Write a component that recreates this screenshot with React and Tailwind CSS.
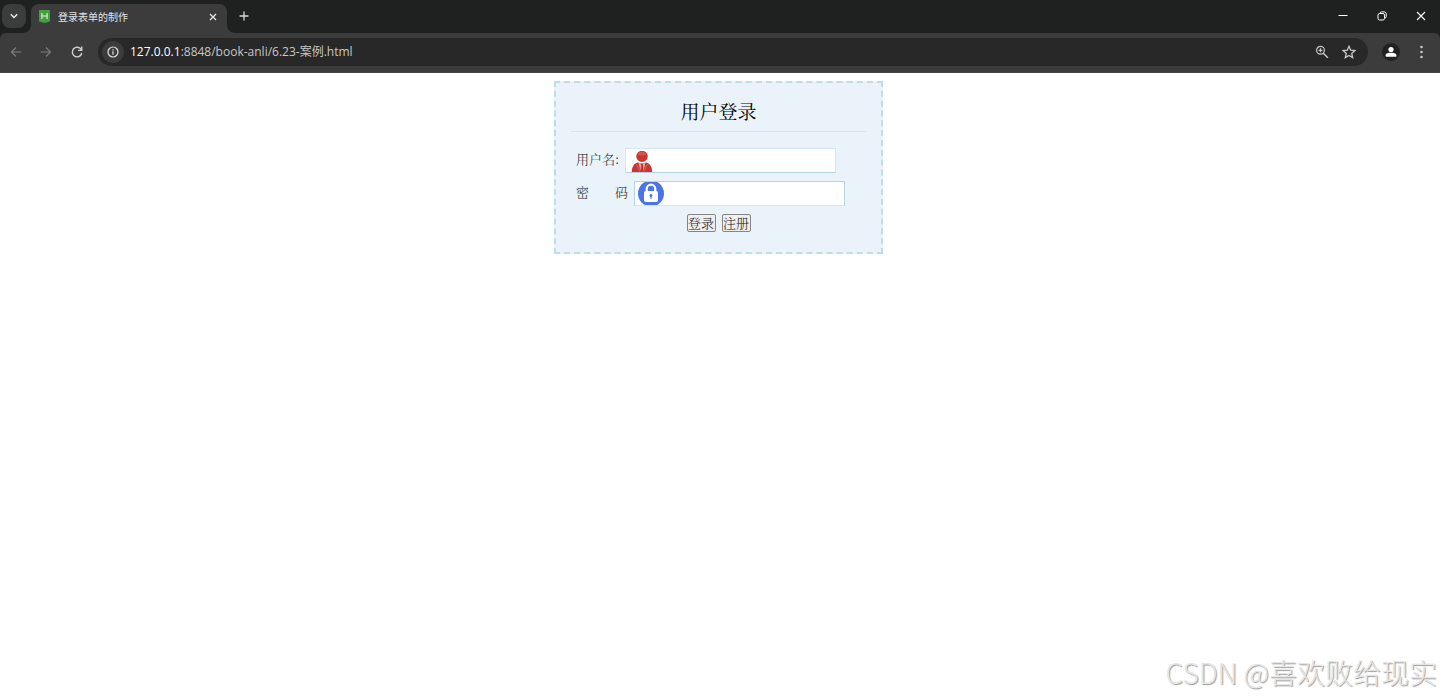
import React from "react";

const UI_FONT = "font-['Open_Sans','Noto_Sans_CJK_SC',sans-serif]";

function ChevronIcon() {
  return (
    <svg width="10" height="10" viewBox="0 0 10 10" fill="none" stroke="#e8e8e8" strokeWidth="1.5">
      <path d="M1.8 3.3 5 6.5l3.2-3.2" />
    </svg>
  );
}

function Flare({ flip }) {
  return (
    <svg width="8" height="8" viewBox="0 0 8 8" className={flip ? "-scale-x-100" : ""} aria-hidden="true">
      <path d="M8 0v8H0c4.4 0 8-3.6 8-8z" fill="#3c3c3c" />
    </svg>
  );
}

function Favicon() {
  return (
    <svg width="11" height="13" viewBox="0 0 11 13" aria-hidden="true">
      <path d="M0 0h11v11.4L5.5 13 0 11.4z" fill="#43a03c" />
      <path d="M2.9 3v6M8.1 3v6M2.9 6h5.2" stroke="#e4f5e2" strokeWidth="1.1" fill="none" />
    </svg>
  );
}

function TabStrip() {
  return (
    <div className="flex h-[33px] items-end bg-[#1f2121]">
      <button aria-label="搜索标签页" className="mb-[5px] ml-0.5 flex size-6 items-center justify-center rounded-lg bg-[#3c3c3c]">
        <ChevronIcon />
      </button>
      <div className="flex items-end pl-[5px]">
        <div className="relative flex h-[29px] w-[196px] items-center rounded-t-lg bg-[#3c3c3c] pr-2 pb-1 pl-2">
          <span className="absolute bottom-0 -left-2"><Flare /></span>
          <span className="absolute -right-2 bottom-0"><Flare flip /></span>
          <Favicon />
          <span className="ml-2 flex-1 text-[10px] leading-4 text-[#e3e3e3]">登录表单的制作</span>
          <button aria-label="关闭标签页" className="flex size-3 items-center justify-center">
            <svg width="8" height="8" viewBox="0 0 8 8" stroke="#e8e8e8" strokeWidth="1.3"><path d="m1 1 6 6M7 1 1 7" /></svg>
          </button>
        </div>
        <button aria-label="新标签页" className="mb-3 ml-3 flex size-[10px] items-center justify-center">
          <svg width="10" height="10" viewBox="0 0 10 10" stroke="#d8d8d8" strokeWidth="1.3"><path d="M5 .5v9M.5 5h9" /></svg>
        </button>
      </div>
      <div className="mb-[11px] ml-auto flex items-center gap-[27px] pr-[13px]">
        <button aria-label="最小化">
          <svg width="12" height="12" viewBox="0 0 12 12" stroke="#fff" strokeWidth="1"><path d="M1.5 5.5h9" /></svg>
        </button>
        <button aria-label="还原">
          <svg width="12" height="12" viewBox="0 0 12 12" fill="none" stroke="#fff" strokeWidth="1">
            <rect x="2" y="3.5" width="6.5" height="6.5" rx="1.6" />
            <path d="M4 3.2c.2-.9.8-1.3 1.6-1.3h2.6c1.2 0 2 .8 2 2v2.7c0 .8-.5 1.4-1.3 1.6" />
          </svg>
        </button>
        <button aria-label="关闭">
          <svg width="12" height="12" viewBox="0 0 12 12" stroke="#fff" strokeWidth="1.1"><path d="m2 2 8 8M10 2l-8 8" /></svg>
        </button>
      </div>
    </div>
  );
}

function Toolbar() {
  return (
    <div className="bg-[#1f2121]">
      <div className="flex h-10 items-center rounded-t-md border-b border-[#484545] bg-[#3c3c3c] pr-3 pb-px pl-[9px]">
        <div className="flex items-center gap-4">
          <button aria-label="后退" className="p-px">
            <svg width="12" height="12" viewBox="0 0 12 12" fill="none" stroke="#7d7d7d" strokeWidth="1.2"><path d="M11.3 6H1.5M6 1.5 1.5 6 6 10.5" /></svg>
          </button>
          <button aria-label="前进" className="p-px">
            <svg width="12" height="12" viewBox="0 0 12 12" fill="none" stroke="#7d7d7d" strokeWidth="1.2"><path d="M.7 6h9.8M6 1.5 10.5 6 6 10.5" /></svg>
          </button>
          <button aria-label="重新加载" className="p-px">
            <svg width="14" height="14" viewBox="0 0 14 14" fill="none" stroke="#d0d0d0" strokeWidth="1.4">
              <path d="M11.2 4.6A4.8 4.8 0 1 0 11.8 8" />
              <path d="M11.7 1.6v3.8H8" />
            </svg>
          </button>
        </div>
        <div className="ml-[13px] flex h-7 flex-1 items-center rounded-full bg-[#282828] pr-3 pl-1">
          <button aria-label="网站信息" className="flex size-[22px] items-center justify-center rounded-full bg-[#3c3c3c]">
            <svg width="12" height="12" viewBox="0 0 12 12" fill="none" stroke="#e3e3e3" strokeWidth="1.2">
              <circle cx="6" cy="6" r="5" />
              <path d="M6 5.3v3.4M6 3.2v1.2" />
            </svg>
          </button>
          <p className="ml-1.5 flex-1 text-[12px] leading-5 text-[#c7c7c7]">
            <span className="text-white">127.0.0.1</span>:8848/book-anli/6.23-案例.html
          </p>
          <button aria-label="缩放" className="mr-[13px]">
            <svg width="14" height="14" viewBox="0 0 14 14" fill="none" stroke="#c7c7c7" strokeWidth="1.2">
              <circle cx="5.5" cy="5.3" r="3.9" />
              <path d="m8.3 8.2 4.6 4.6" strokeWidth="1.5" />
              <path d="M5.5 3.3v4M3.5 5.3h4" />
            </svg>
          </button>
          <button aria-label="收藏">
            <svg width="14" height="14" viewBox="0 0 14 14" fill="none" stroke="#c7c7c7" strokeWidth="1.3">
              <path d="m7 1.3 1.7 3.9 4.2.4-3.2 2.8 1 4.2L7 10.4l-3.7 2.2 1-4.2L1.1 5.6l4.2-.4z" />
            </svg>
          </button>
        </div>
        <button aria-label="用户" className="ml-3.5 flex size-[18px] items-center justify-center rounded-full bg-[#202222]">
          <svg width="12" height="12" viewBox="0 0 12 12" fill="#fff">
            <circle cx="6" cy="3.5" r="2.6" />
            <path d="M.6 10V9C.6 7.3 4 6.7 6 6.7s5.4.6 5.4 2.3v1c0 .4-.2.7-.6.7H1.200c-.4 0-.6-.3-.6-.7z" />
          </svg>
        </button>
        <button aria-label="菜单" className="ml-3.5">
          <svg width="14" height="14" viewBox="0 0 14 14" fill="#c7c7c7">
            <circle cx="7.5" cy="2" r="1.3" />
            <circle cx="7.5" cy="7" r="1.3" />
            <circle cx="7.5" cy="12" r="1.3" />
          </svg>
        </button>
      </div>
    </div>
  );
}

function UserIcon() {
  return (
    <svg width="24" height="23" viewBox="-2 0 24 23" aria-hidden="true">
      <path d="M5.3 7.6C5.3 3.8 7.8 2 11 2s5.7 1.8 5.7 5.6c0 3-2.7 5.4-5.7 5.4S5.3 10.600 5.3 7.6z" fill="#c93531" />
      <path d="M6.3 5.2C7.500 2 14.5 2 15.7 5.2c-2.7 1.600-6.700 1.600-9.400 0z" fill="#d9524c" />
      <path d="M.8 23c0-5.200 2.200-8.800 6.200-9.600l4 1.600 4-1.600c4 .8 6.200 4.400 6.200 9.600z" fill="#c93531" />
      <path d="M7.500 13.500 9.700 23h2.600l2.200-9.500L11 15z" fill="#eba9a6" />
      <path d="M9.600 14.500h2.800l-.6 2L13 23H9l1.200-6.500z" fill="#c93531" />
      <path d="m5.500 15 3.400 7.500M16.500 15l-3.400 7.500" stroke="#e08580" strokeWidth=".6" />
    </svg>
  );
}

function LockIcon() {
  return (
    <svg width="26" height="23" viewBox="0 1 26 23" aria-hidden="true">
      <circle cx="13" cy="12.5" r="13" fill="#4b74e4" />
      <path d="M8.700 11V8a4.300 4.300 0 0 1 8.600 0v3" fill="none" stroke="#fff" strokeWidth="2.2" />
      <rect x="6" y="10" width="14" height="11" rx="1.8" fill="#fff" />
      <circle cx="13" cy="14.5" r="1.4" fill="#4b74e4" />
      <path d="M13 15v2.8" stroke="#4b74e4" strokeWidth="1.2" />
    </svg>
  );
}

function Field({ id, type, label, icon, borders }) {
  return (
    <div className="flex items-center gap-1.5">
      <label htmlFor={id} className="pb-[3px] text-[13px] leading-5 whitespace-pre">{label}</label>
      <div className={`relative flex h-[25px] w-[211px] border bg-white ${borders}`}>
        <span className="pointer-events-none absolute top-0 left-[3px]">{icon}</span>
        <input id={id} type={type} className="w-full bg-transparent pr-1 pl-8 text-[13px] outline-none" />
      </div>
    </div>
  );
}

function LoginForm() {
  const button = "h-[18px] w-[29px] rounded-xs border border-[#858585] bg-[#efefef] text-[13px] leading-4";
  return (
    <form
      onSubmit={(e) => e.preventDefault()}
      className="w-[329px] border-2 border-dashed border-[#bcdcf0] bg-[#ebf3fa] px-[15px] pt-3.5 pb-5 font-['Noto_Serif_CJK_SC','Noto_Sans_CJK_SC',serif] font-light text-[#222]"
    >
      <h1 className="border-b border-[#d5e5f2] pb-1.5 text-center text-[19px] leading-7 font-normal text-black">用户登录</h1>
      <div className="flex flex-col gap-2 pt-4 pl-[5px]">
        <Field id="user" type="text" label="用户名:" icon={<UserIcon />} borders="border-t-[#d5e5f2] border-r-[#d5e5f2] border-b-[#b5d3e6] border-l-[#d5e5f2]" />
        <Field id="pass" type="password" label={"密\u3000\u3000码"} icon={<LockIcon />} borders="border-t-[#b5d3e6] border-r-[#b5d3e6] border-b-[#d5e5f2] border-l-[#b5d3e6]" />
      </div>
      <div className="flex justify-center gap-1.5 pt-2">
        <button type="submit" className={button}>登录</button>
        <button type="button" className={button}>注册</button>
      </div>
    </form>
  );
}

export default function App() {
  return (
    <div className="flex min-h-screen flex-col bg-white">
      <header className={`mr-px ${UI_FONT}`}>
        <TabStrip />
        <Toolbar />
      </header>
      <main className="flex flex-1 flex-col items-center pt-2 pr-1">
        <LoginForm />
        <p className="mt-auto self-end pb-2 font-['Noto_Sans_CJK_SC',sans-serif] text-[28px] leading-10 font-light text-[#e6e6e6] [text-shadow:1px_1px_1px_#999]">
          CSDN @喜欢败给现实
        </p>
      </main>
    </div>
  );
}
